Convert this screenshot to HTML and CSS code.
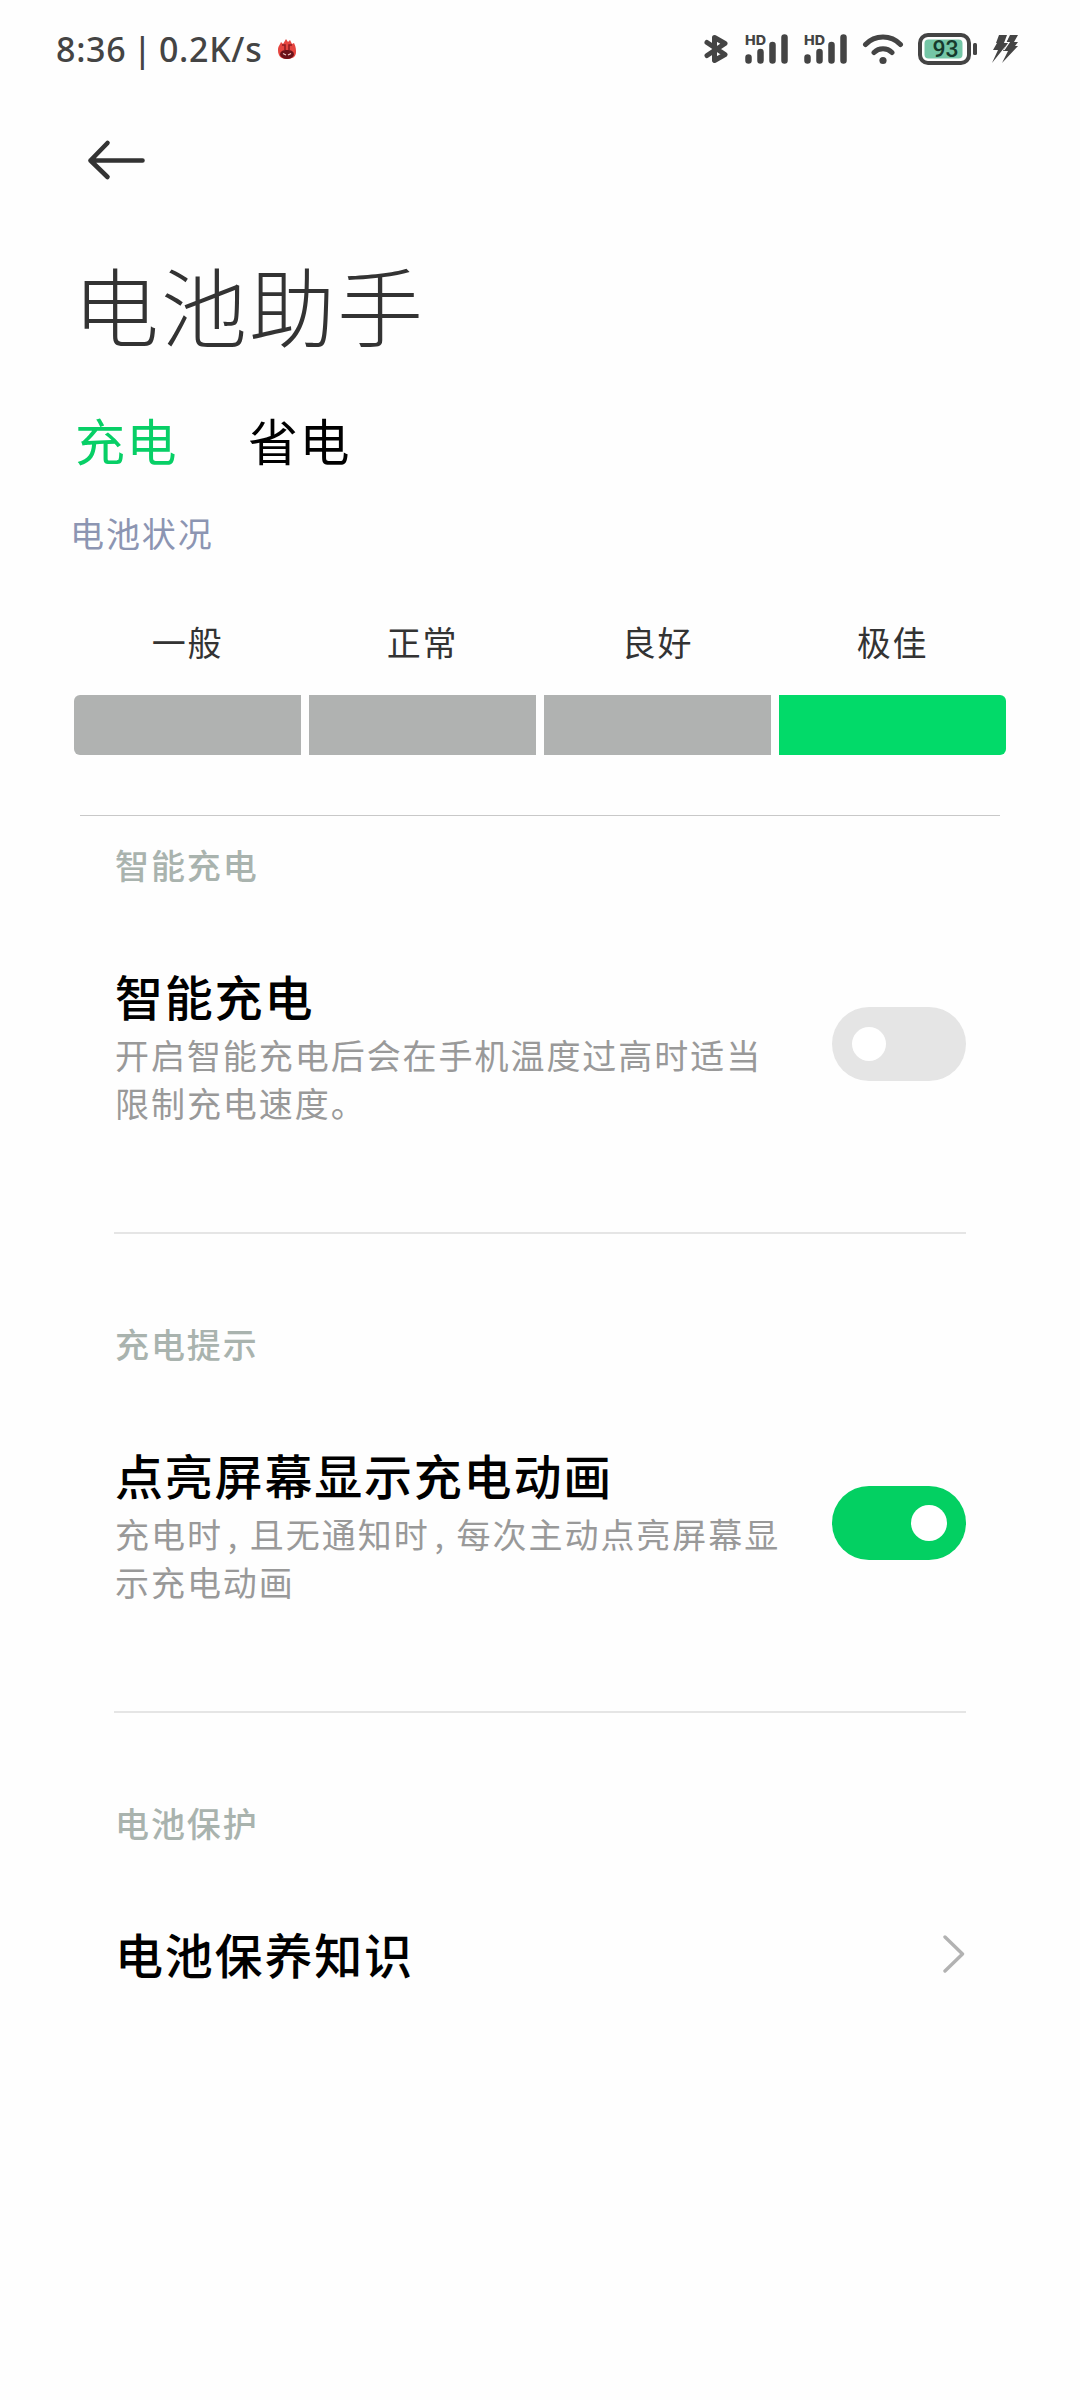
FILE: index.html
```html
<!DOCTYPE html>
<html lang="zh-CN">
<head>
    <meta charset="UTF-8">
    <meta name="viewport" content="width=device-width, initial-scale=1.0">
    <title>电池助手</title>
    <link rel="stylesheet" href="styles.css">
</head>
<body>
    <div class="status-bar">
        <span class="status-text">8:36 | 0.2K/s</span>
        <svg class="app-icon" width="20" height="22" viewBox="0 0 20 22">
            <path d="M1 12C1 8 3 7 4 4L6 6L9 1L11 4L13 2L15 6L17 5C19 9 19 12 19 14C19 19 15 21 10 21C5 21 1 19 1 12Z" fill="#e5453f"/>
            <path d="M3 17C3 13 6 12 10 12C14 12 17 13 17 17C15 20 13 21 10 21C7 21 5 20 3 17Z" fill="#6b1219"/>
            <path d="M5 7H8V12M15 7H12V12" fill="none" stroke="#8f1d22" stroke-width="1.6"/>
            <path d="M6 15.500L9 17M14 15.500L11 17" stroke="#f3c9c6" stroke-width="1.300"/>
        </svg>
        <div class="status-icons">
            <svg width="26" height="32" viewBox="0 0 26 32">
                <path d="M3 9.500L21 21.500L10.500 27.500V4.500L21 10.500L3 22.500" fill="none" stroke="#444" stroke-width="5" stroke-linejoin="round" stroke-linecap="round"/>
            </svg>
            <svg class="signal" width="45" height="32" viewBox="0 0 45 32">
                <text x="1" y="12" textLength="21" lengthAdjust="spacingAndGlyphs">HD</text>
                <path d="M4.500 24.500V27.500M16.500 19V27.500M28.500 12V27.500M40.500 4.500V27.500"/>
            </svg>
            <svg class="signal" width="45" height="32" viewBox="0 0 45 32">
                <text x="1" y="12" textLength="21" lengthAdjust="spacingAndGlyphs">HD</text>
                <path d="M4.500 24.500V27.500M16.500 19V27.500M28.500 12V27.500M40.500 4.500V27.500"/>
            </svg>
            <svg class="wifi" width="42" height="32" viewBox="0 0 42 32">
                <path d="M3.500 11.500C13 1.500 29 1.500 38.500 11.500M12 19.500C17 14.500 25 14.500 30 19.500" fill="none" stroke="#444" stroke-width="5" stroke-linecap="round"/>
                <circle cx="21" cy="27.500" r="3.600" fill="#444"/>
            </svg>
            <svg class="battery" width="60" height="34" viewBox="0 0 60 34">
                <rect x="2" y="3" width="49" height="28" rx="8" fill="none" stroke="#444" stroke-width="4"/>
                <rect x="6.500" y="7.500" width="38" height="19" rx="4" fill="#74c6a6"/>
                <rect x="55" y="11" width="4" height="12" rx="1.500" fill="#444"/>
                <text x="27.500" y="25" text-anchor="middle">93</text>
            </svg>
            <svg width="28" height="32" viewBox="0 0 28 32">
                <path d="M7 2H15L12 10H16L0 30L6 17H1L5 10H4Z" fill="#444"/>
                <path d="M18 2H26L22 9H26L23 13H26L10 30L16 18H11L15 10H14Z" fill="#444"/>
                <path d="M16.500 2L13.500 9.500H17L12 17" fill="none" stroke="#fff" stroke-width="1.200"/>
            </svg>
        </div>
    </div>

    <div class="nav">
        <svg width="60" height="44" viewBox="0 0 60 44">
            <path d="M20.500 5L3.500 22.500L20.500 39M3.500 22.500H55.500" fill="none" stroke="#333" stroke-width="4.600" stroke-linecap="round" stroke-linejoin="round"/>
        </svg>
    </div>

    <h1>电池助手</h1>

    <div class="tabs">
        <span class="tab active">充电</span>
        <span class="tab">省电</span>
    </div>

    <div class="health">
        <div class="health-title">电池状况</div>
        <div class="levels">
            <div class="level">一般</div>
            <div class="level">正常</div>
            <div class="level">良好</div>
            <div class="level">极佳</div>
        </div>
        <div class="bars">
            <div class="bar"></div>
            <div class="bar"></div>
            <div class="bar"></div>
            <div class="bar current"></div>
        </div>
    </div>

    <div class="settings">
        <div class="section first">
            <h2>智能充电</h2>
            <div class="row">
                <div class="row-text">
                    <h3>智能充电</h3>
                    <p>开启智能充电后会在手机温度过高时适当限制充电速度。</p>
                </div>
                <div class="switch"><div class="knob"></div></div>
            </div>
        </div>
        <div class="section">
            <h2>充电提示</h2>
            <div class="row">
                <div class="row-text">
                    <h3>点亮屏幕显示充电动画</h3>
                    <p>充电时<span class="comma">,</span>且无通知时<span class="comma">,</span>每次主动点亮屏幕显示充电动画</p>
                </div>
                <div class="switch on"><div class="knob"></div></div>
            </div>
        </div>
        <div class="section">
            <h2>电池保护</h2>
            <div class="row link">
                <h3>电池保养知识</h3>
                <svg width="24" height="40" viewBox="0 0 24 40">
                    <path d="M3 4L20.500 21L3 38" fill="none" stroke="#b2b2b2" stroke-width="3.400" stroke-linecap="round" stroke-linejoin="round"/>
                </svg>
            </div>
        </div>
    </div>
</body>
</html>
```

FILE: styles.css
```css
* {
    margin: 0;
    padding: 0;
    box-sizing: border-box;
}
body {
    width: 1080px;
    height: 2400px;
    background: #fefefe;
    font-family: 'Noto Sans CJK SC', sans-serif;
    color: #000;
}
svg {
    display: block;
    flex-shrink: 0;
}

/* Status bar */
.status-bar {
    height: 98px;
    padding: 0 60px 0 56px;
    display: flex;
    align-items: center;
}
.status-text {
    width: 221px;
    font-family: 'Noto Sans', sans-serif;
    font-size: 34px;
    font-weight: 500;
    letter-spacing: 0.7px;
    word-spacing: -3px;
    line-height: 48px;
    white-space: nowrap;
    color: #444;
}
.status-icons {
    display: flex;
    align-items: center;
    margin-left: auto;
    gap: 14px;
}
.signal {
    overflow: visible;
}
.signal path {
    fill: none;
    stroke: #444;
    stroke-width: 6.5;
    stroke-linecap: round;
}
.signal text {
    font-family: Inter, sans-serif;
    font-size: 13px;
    font-weight: 800;
    fill: #444;
}
.battery text {
    font-family: Roboto, sans-serif;
    font-size: 23px;
    font-weight: 500;
    fill: #173a2d;
}

/* Header */
.nav {
    height: 155px;
    padding: 40px 0 0 87px;
}
h1 {
    margin: 0 0 55px 73px;
    padding-top: 1px;
    font-size: 86px;
    font-weight: 300;
    letter-spacing: 2px;
    line-height: 100px;
    color: #333;
}
.tabs {
    display: flex;
    gap: 70px;
    padding-left: 75px;
    margin-bottom: 40px;
}
.tab {
    font-size: 50px;
    letter-spacing: 1.5px;
    line-height: 60px;
}
.tab.active {
    color: #07cf66;
}

/* Battery health */
.health {
    margin: 0 74px;
}
.health-title {
    margin: 0 0 61px -4px;
    font-size: 34px;
    letter-spacing: 1.9px;
    line-height: 48px;
    color: #8c95b2;
}
.levels,
.bars {
    display: grid;
    grid-template-columns: repeat(4, 1fr);
    gap: 8px;
}
.levels {
    margin-bottom: 29px;
}
.level {
    text-align: center;
    font-size: 34px;
    letter-spacing: 1.7px;
    line-height: 48px;
    color: #333;
}
.bar {
    height: 60px;
    background: #b0b2b1;
}
.bar:first-child {
    border-radius: 6px 0 0 6px;
}
.bar:last-child {
    border-radius: 0 6px 6px 0;
}
.bar.current {
    background: #02da69;
}

/* Settings list */
.settings {
    margin: 60px 80px 0;
    border-top: 1px solid #c8c8c8;
}
.section {
    margin: 0 34px;
    padding-top: 86px;
}
.section.first {
    padding-top: 25px;
}
.section + .section {
    border-top: 2px solid #e5e5e5;
}
h2 {
    margin: 0 0 76px 1px;
    font-size: 34px;
    font-weight: 500;
    letter-spacing: 1.9px;
    line-height: 48px;
    color: #a9b3ae;
}
.row {
    display: flex;
    justify-content: space-between;
    align-items: center;
    padding-bottom: 105px;
}
.row.link {
    padding-bottom: 0;
}
.row-text {
    width: 674px;
    padding-left: 1px;
}
h3 {
    margin-bottom: 6px;
    font-size: 48px;
    font-weight: 500;
    letter-spacing: 1.8px;
    line-height: 60px;
}
.link h3 {
    margin: 0 0 0 1px;
}
p {
    font-size: 34px;
    letter-spacing: 1.95px;
    line-height: 48px;
    color: #999;
}
.comma {
    display: inline-block;
    width: 27px;
    padding-left: 5px;
}
.switch {
    display: flex;
    align-items: center;
    width: 134px;
    height: 74px;
    margin-bottom: 4px;
    padding: 0 20px;
    border-radius: 38px;
    background: #e5e5e5;
}
.knob {
    width: 34px;
    height: 34px;
    border-radius: 50%;
    background: #fff;
}
.switch.on {
    justify-content: flex-end;
    padding-right: 19px;
    background: #03d062;
}
.on .knob {
    width: 36px;
    height: 36px;
}
```
